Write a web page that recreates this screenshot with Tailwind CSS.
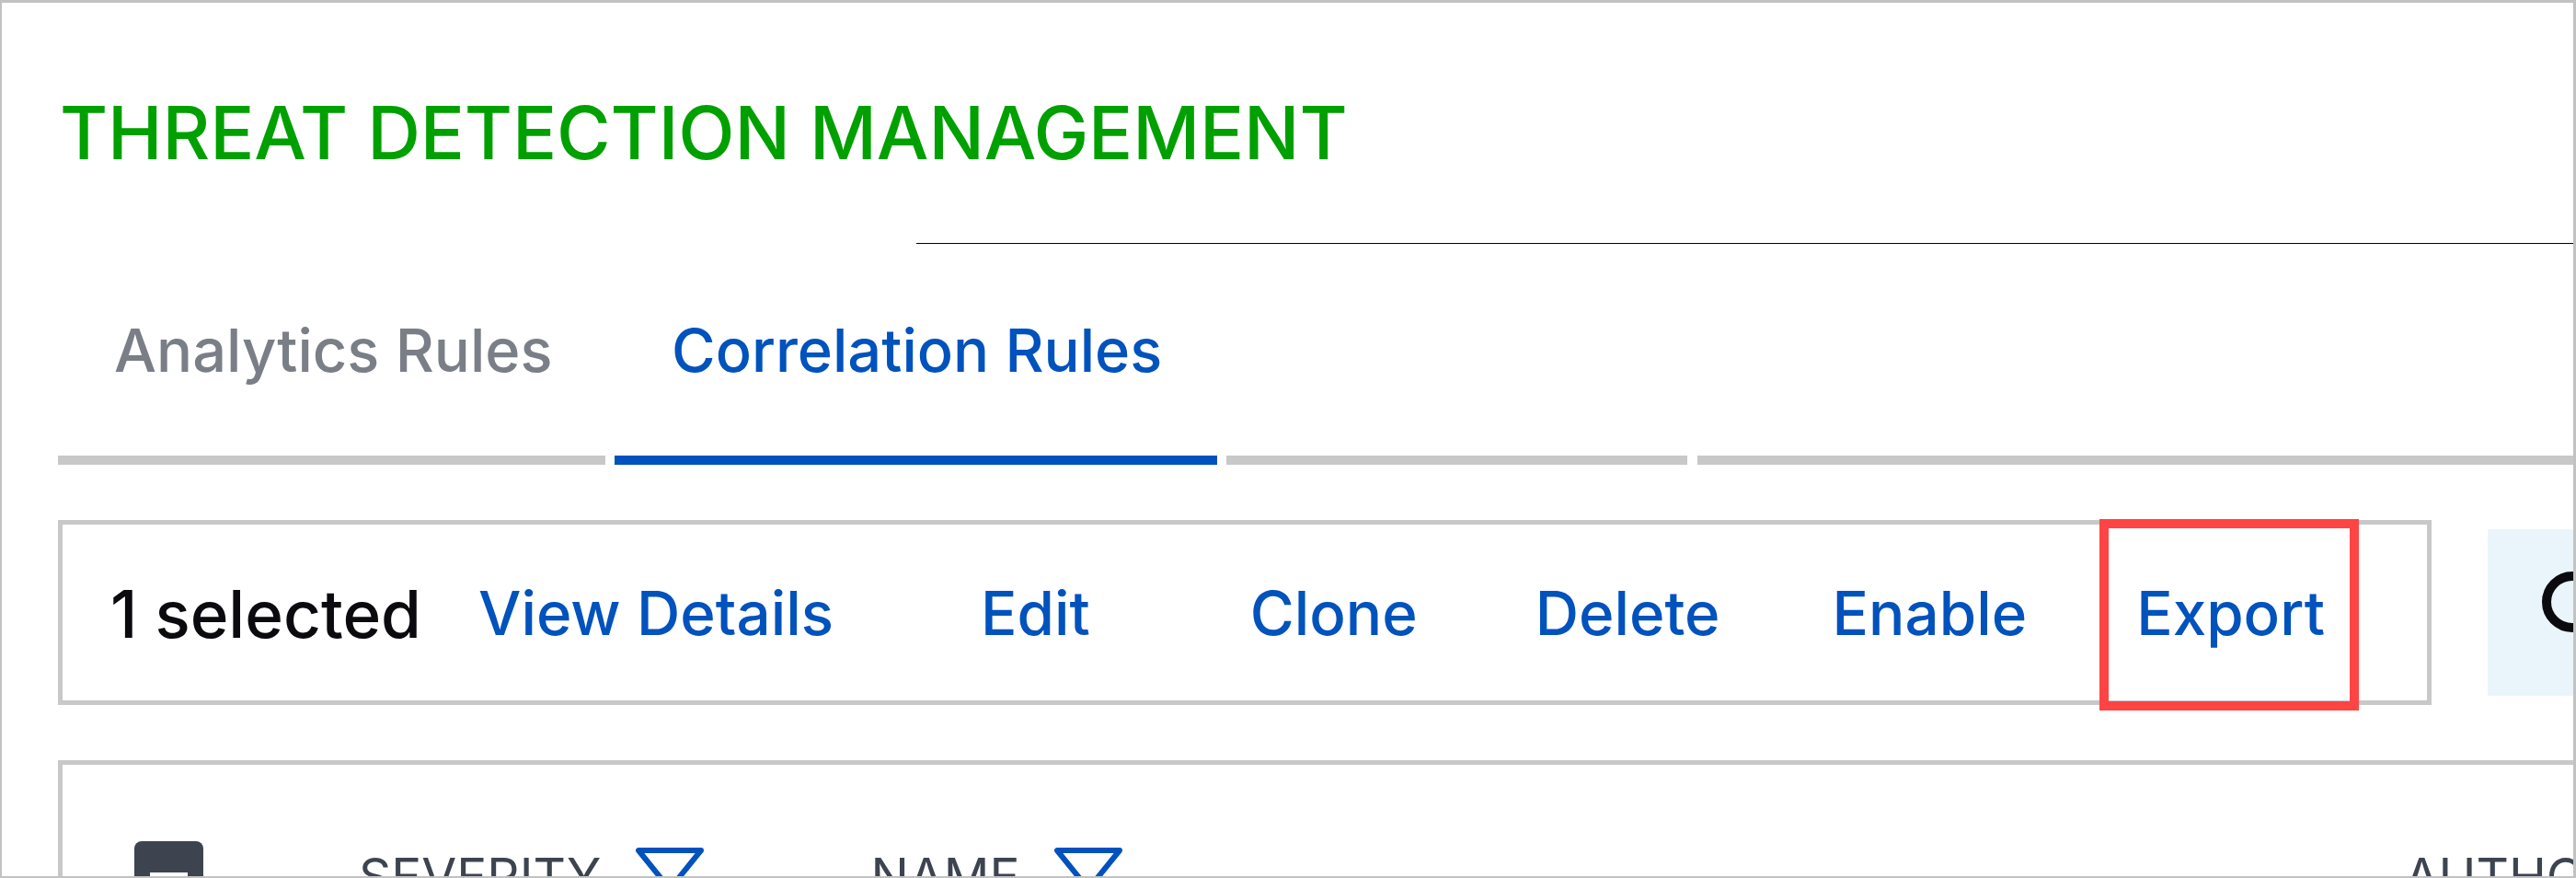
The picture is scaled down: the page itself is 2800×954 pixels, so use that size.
<!DOCTYPE html>
<html>
<head>
<meta charset="utf-8">
<script src="https://cdn.jsdelivr.net/npm/@tailwindcss/browser@4"></script>
<title>Threat Detection Management</title>
</head>
<body class="bg-white">
<div class="relative w-[2800px] h-[954px] overflow-hidden bg-white border-t-[3px] border-l-2 border-r-[3px] border-b-2 border-[#c2c2c2] font-['Inter','Noto_Sans',sans-serif]">
  <h1 class="ml-[63px] pt-[92px] h-[261px] text-[80px] leading-[97px] font-medium tracking-[-0.15px] text-[#00a000] whitespace-nowrap">THREAT DETECTION MANAGEMENT</h1>
  <div class="ml-[994px] h-[1px] mb-[1px] bg-black"></div>

  <div class="ml-[61px] flex gap-[10px] h-[239px]">
    <div class="w-[595px] h-full border-b-[10px] border-[#c8c8c8] pl-[61px] pt-[75px] text-[65px] leading-[80px] font-medium text-[#7a7f87] whitespace-nowrap">Analytics Rules</div>
    <div class="w-[655px] h-full border-b-[10px] border-[#0052bd] pl-[62px] pt-[75px] text-[65px] leading-[80px] font-medium text-[#0052bd] whitespace-nowrap">Correlation Rules</div>
    <div class="w-[501px] h-full border-b-[10px] border-[#c8c8c8]"></div>
    <div class="flex-1 ml-[1px] h-full border-b-[10px] border-[#c8c8c8]"></div>
  </div>

  <div class="mt-[60px] ml-[61px] flex items-center">
    <div class="w-[2580px] h-[201px] shrink-0 border-[5px] border-[#c8c8c8] flex items-center pl-[52px] pt-[3px] text-[65.5px] leading-[80px] font-medium text-[#0052bd] whitespace-nowrap">
      <span class="text-[#0a0a0f] text-[71px]">1 selected</span>
      <a class="ml-[62px]">View Details</a>
      <a class="ml-[160px]">Edit</a>
      <a class="ml-[174px]">Clone</a>
      <a class="ml-[128px]">Delete</a>
      <a class="ml-[122px]">Enable</a>
      <a class="ml-[119px]">Export</a>
    </div>
    <div class="ml-[61px] flex-1 h-[181px] bg-[#eaf5fb] flex items-center pl-[55px]">
      <svg class="shrink-0 mb-[24px]" width="74" height="74" viewBox="0 0 74 74" fill="none"><circle cx="37" cy="37" r="28" stroke="#0a0a0f" stroke-width="10"/></svg>
    </div>
  </div>

  <div class="mt-[60px] ml-[61px] h-[200px] border-t-[5px] border-l-[5px] border-[#c8c8c8] pl-[78px] pt-[83px] flex items-start text-[55px] leading-[68px] text-[#3d4450] whitespace-nowrap">
    <div class="w-[75px] h-[75px] shrink-0 rounded-[8px] bg-[#3d4450] pt-[34px] px-[17px]"><div class="h-[24px] bg-white"></div></div>
    <div class="ml-[169px] mt-[4px]">SEVERITY</div>
    <svg class="ml-[38px] mt-[7px] shrink-0" width="74" height="60" viewBox="0 0 74 60" fill="none"><path d="M3 3H71L37 45Z" stroke="#0052bd" stroke-width="6" stroke-linejoin="round"/></svg>
    <div class="ml-[181px] mt-[4px]">NAME</div>
    <svg class="ml-[37px] mt-[7px] shrink-0" width="74" height="60" viewBox="0 0 74 60" fill="none"><path d="M3 3H71L37 45Z" stroke="#0052bd" stroke-width="6" stroke-linejoin="round"/></svg>
    <div class="ml-[1394px] mt-[4px]">AUTHOR</div>
  </div>

  <div class="absolute left-[2280px] top-[561px] w-[282px] h-[208px] border-[10px] border-[#ff4444]"></div>
</div>
</body>
</html>
